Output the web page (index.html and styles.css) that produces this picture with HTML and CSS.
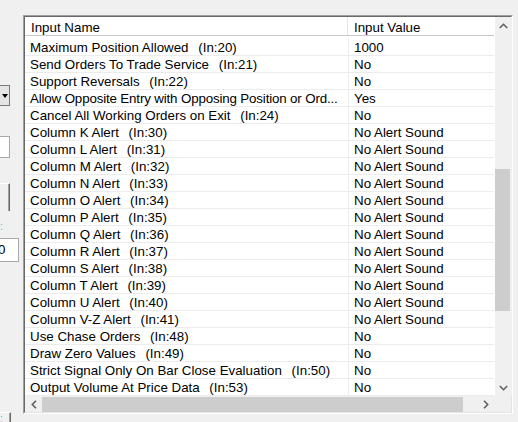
FILE: index.html
```html
<!DOCTYPE html>
<html>
<head>
<meta charset="utf-8">
<link rel="stylesheet" href="styles.css">
</head>
<body>
<div class="page">
  <div class="side">
    <div class="combo"><span class="arrow"></span></div>
    <div class="tbox"></div>
    <div class="btn"></div>
    <div class="lbl">:</div>
    <div class="tbox2">0</div>
    <div class="btn2"><span class="lbl2">:</span></div>
  </div>
  <div class="grid">
    <div class="grid-in">
      <div class="main">
        <div class="view">
          <div class="head">
            <div class="h1">Input Name</div>
            <div class="h2">Input Value</div>
          </div>
          <div class="rows">
            <div class="row"><div class="c1">Maximum Position Allowed <span class="ln">(In:20)</span></div><div class="c2">1000</div></div>
            <div class="row"><div class="c1">Send Orders To Trade Service <span class="ln">(In:21)</span></div><div class="c2">No</div></div>
            <div class="row"><div class="c1">Support Reversals <span class="ln">(In:22)</span></div><div class="c2">No</div></div>
            <div class="row"><div class="c1 tight">Allow Opposite Entry with Opposing Position or Ord...</div><div class="c2">Yes</div></div>
            <div class="row"><div class="c1">Cancel All Working Orders on Exit <span class="ln">(In:24)</span></div><div class="c2">No</div></div>
            <div class="row"><div class="c1">Column K Alert <span class="ln">(In:30)</span></div><div class="c2">No Alert Sound</div></div>
            <div class="row"><div class="c1">Column L Alert <span class="ln">(In:31)</span></div><div class="c2">No Alert Sound</div></div>
            <div class="row"><div class="c1">Column M Alert <span class="ln">(In:32)</span></div><div class="c2">No Alert Sound</div></div>
            <div class="row"><div class="c1">Column N Alert <span class="ln">(In:33)</span></div><div class="c2">No Alert Sound</div></div>
            <div class="row"><div class="c1">Column O Alert <span class="ln">(In:34)</span></div><div class="c2">No Alert Sound</div></div>
            <div class="row"><div class="c1">Column P Alert <span class="ln">(In:35)</span></div><div class="c2">No Alert Sound</div></div>
            <div class="row"><div class="c1">Column Q Alert <span class="ln">(In:36)</span></div><div class="c2">No Alert Sound</div></div>
            <div class="row"><div class="c1">Column R Alert <span class="ln">(In:37)</span></div><div class="c2">No Alert Sound</div></div>
            <div class="row"><div class="c1">Column S Alert <span class="ln">(In:38)</span></div><div class="c2">No Alert Sound</div></div>
            <div class="row"><div class="c1">Column T Alert <span class="ln">(In:39)</span></div><div class="c2">No Alert Sound</div></div>
            <div class="row"><div class="c1">Column U Alert <span class="ln">(In:40)</span></div><div class="c2">No Alert Sound</div></div>
            <div class="row"><div class="c1">Column V-Z Alert <span class="ln">(In:41)</span></div><div class="c2">No Alert Sound</div></div>
            <div class="row"><div class="c1">Use Chase Orders <span class="ln">(In:48)</span></div><div class="c2">No</div></div>
            <div class="row"><div class="c1">Draw Zero Values <span class="ln">(In:49)</span></div><div class="c2">No</div></div>
            <div class="row"><div class="c1">Strict Signal Only On Bar Close Evaluation <span class="ln">(In:50)</span></div><div class="c2">No</div></div>
            <div class="row"><div class="c1">Output Volume At Price Data <span class="ln">(In:53)</span></div><div class="c2">No</div></div>
          </div>
        </div>
        <div class="vscroll">
          <div class="arr">
            <svg width="9" height="6" viewBox="0 0 9 6"><path d="M0.8 5 L4.5 1.3 L8.2 5" fill="none" stroke="#606060" stroke-width="1.6"/></svg>
          </div>
          <div class="vtrack"><div class="vthumb"></div></div>
          <div class="arr">
            <svg width="9" height="6" viewBox="0 0 9 6"><path d="M0.8 1 L4.5 4.7 L8.2 1" fill="none" stroke="#606060" stroke-width="1.6"/></svg>
          </div>
        </div>
      </div>
      <div class="bottom">
        <div class="hscroll">
          <div class="harr">
            <svg width="6" height="9" viewBox="0 0 6 9"><path d="M5 0.8 L1.3 4.5 L5 8.2" fill="none" stroke="#606060" stroke-width="1.6"/></svg>
          </div>
          <div class="htrack"><div class="hthumb"></div></div>
          <div class="harr">
            <svg width="6" height="9" viewBox="0 0 6 9"><path d="M1 0.8 L4.7 4.5 L1 8.2" fill="none" stroke="#606060" stroke-width="1.6"/></svg>
          </div>
        </div>
        <div class="corner"></div>
      </div>
    </div>
  </div>
</div>
</body>
</html>
```

FILE: styles.css
```css
html, body {
  margin: 0;
  padding: 0;
  background: #f0f0f0;
}
body {
  font-family: "Liberation Sans", Arial, sans-serif;
  font-size: 13.33px;
  color: #000;
  width: 518px;
  height: 422px;
  overflow: hidden;
}
.page {
  display: flex;
  align-items: flex-start;
}
.side {
  width: 23px;
  flex: none;
  display: flex;
  flex-direction: column;
  align-items: flex-start;
}
.combo {
  margin-top: 85px;
  width: 7px;
  height: 19px;
  border: 1px solid #7a7a7a;
  border-left: none;
  background: #e5e5e5;
  display: flex;
  align-items: center;
  padding-left: 2px;
}
.arrow {
  width: 0;
  height: 0;
  border-left: 3px solid transparent;
  border-right: 3px solid transparent;
  border-top: 4px solid #000;
}
.tbox {
  margin-top: 30px;
  width: 9px;
  height: 20px;
  background: #fff;
  border: 1px solid #a9a9a9;
  border-left: none;
}
.btn {
  margin-top: 25px;
  width: 9px;
  height: 27px;
  background: #f0f0f0;
  border-top: 1px solid #fff;
  border-right: 1px solid #696969;
  box-shadow: inset -1px 0 0 #a0a0a0;
}
.lbl {
  margin-top: 12px;
  height: 7px;
  line-height: 7px;
  font-size: 10px;
  color: #4bc4e0;
  overflow: hidden;
}
.tbox2 {
  margin-top: 8px;
  width: 19px;
  height: 24px;
  line-height: 22px;
  background: #fff;
  border: 1px solid #a9a9a9;
  border-left: none;
  text-indent: -2px;
  overflow: hidden;
  box-sizing: border-box;
}
.btn2 {
  margin-top: 150px;
  width: 10px;
  height: 20px;
  border-top: 1px solid #fff;
  border-right: 1px solid #696969;
  box-shadow: inset -1px 0 0 #a0a0a0;
}
.lbl2 {
  display: block;
  margin-top: 2px;
  font-size: 10px;
  line-height: 8px;
  color: #4bc4e0;
}
.grid {
  margin-top: 15px;
  width: 490px;
  height: 399px;
  box-sizing: border-box;
  border-top: 1px solid #a0a0a0;
  border-left: 1px solid #a0a0a0;
  border-right: 1px solid #fff;
  border-bottom: 1px solid #fff;
  flex: none;
}
.grid-in {
  height: 100%;
  box-sizing: border-box;
  border-top: 1px solid #696969;
  border-left: 1px solid #696969;
  border-right: 1px solid #e3e3e3;
  border-bottom: 1px solid #e3e3e3;
  background: #fff;
  display: flex;
  flex-direction: column;
}
.main {
  display: flex;
  height: 379px;
  flex: none;
}
.view {
  width: 469px;
  flex: none;
  overflow: hidden;
}
.head {
  display: flex;
  height: 19px;
  box-sizing: border-box;
  border-bottom: 1px solid #c8c8c8;
  padding-top: 2px;
  line-height: 17px;
}
.h1 {
  width: 323px;
  box-sizing: border-box;
  padding-left: 6px;
  margin-top: -2px;
  padding-top: 2px;
  border-right: 1px solid #e5e5e5;
}
.h2 {
  flex: 1;
  padding-left: 6px;
}
.rows {
  padding-top: 3px;
}
.row {
  display: flex;
  height: 17px;
  box-sizing: border-box;
  border-bottom: 1px solid #ececec;
  line-height: 18px;
}
.c1 {
  width: 324px;
  box-sizing: border-box;
  padding-left: 5px;
  border-right: 1px solid #ececec;
  white-space: nowrap;
  overflow: hidden;
}
.tight {
  letter-spacing: -0.15px;
}
.ln {
  margin-left: 6px;
}
.c2 {
  flex: 1;
  padding-left: 5px;
  white-space: nowrap;
}
.vscroll {
  width: 17px;
  flex: none;
  margin-left: 1px;
  background: #f0f0f0;
  display: flex;
  flex-direction: column;
}
.arr {
  height: 17px;
  flex: none;
  display: flex;
  align-items: center;
  justify-content: center;
}
.vtrack {
  flex: 1;
  padding-top: 135px;
}
.vthumb {
  width: 15px;
  height: 142px;
  background: #cdcdcd;
}
.bottom {
  display: flex;
  flex: 1;
}
.hscroll {
  width: 469px;
  flex: none;
  background: #f0f0f0;
  display: flex;
}
.harr {
  width: 17px;
  flex: none;
  display: flex;
  align-items: center;
  justify-content: center;
}
.htrack {
  flex: 1;
  display: flex;
  align-items: center;
}
.hthumb {
  width: 421px;
  height: 15px;
  background: #cdcdcd;
}
.corner {
  flex: 1;
  background: #f0f0f0;
}
```
